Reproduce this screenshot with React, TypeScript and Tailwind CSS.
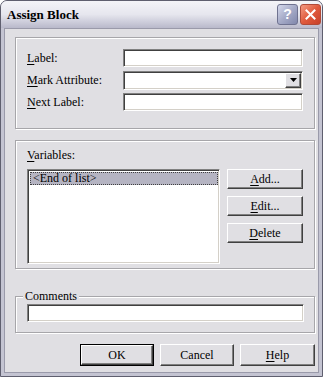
import React from "react";

const font = { fontFamily: '"Liberation Serif", "Times New Roman", serif' };

function U({ children }: { children: React.ReactNode }) {
  return <span className="underline underline-offset-[2px] decoration-1">{children}</span>;
}

// sunken field, classic 2px inset edge
function Field({ className = "", children }: { className?: string; children?: React.ReactNode }) {
  return (
    <div
      className={
        "border border-t-[#808080] border-l-[#808080] border-b-white border-r-white bg-white shadow-[inset_1px_1px_0_#404040,inset_-1px_-1px_0_#d4d0c8] " +
        className
      }
    >
      {children}
    </div>
  );
}

function Btn({
  children,
  className = "",
  isDefault = false,
}: {
  children: React.ReactNode;
  className?: string;
  isDefault?: boolean;
}) {
  const inner = (
    <div className="flex h-full w-full items-center justify-center border border-t-white border-l-white border-b-[#404040] border-r-[#404040] bg-[#e0dfe3] text-[12px] text-black shadow-[inset_-1px_-1px_0_#808080]">
      {children}
    </div>
  );
  if (isDefault) {
    return <div className={"border border-black " + className}>{inner}</div>;
  }
  return <div className={className}>{inner}</div>;
}

function Group({ className = "", children }: { className?: string; children: React.ReactNode }) {
  return (
    <div
      className={
        "relative border border-[#a7a6aa] shadow-[inset_1px_1px_0_#fff,1px_1px_0_#fff] " + className
      }
    >
      {children}
    </div>
  );
}

export default function App() {
  return (
    <div className="h-[377px] w-[327px] bg-white" style={font}>
      <div className="flex h-[377px] w-[323px] flex-col overflow-hidden rounded-t-[7px] border border-[#5f5f6f] bg-[#c4c4d2]">
        {/* Title bar */}
        <div className="flex h-[27px] shrink-0 items-center justify-between bg-gradient-to-b from-[#f4f4f8] via-[#e6e6ee] to-[#b9b9cb] pl-[6px] pr-[1px]">
          <span className="text-[13px] font-bold text-black">Assign Block</span>
          <div className="flex gap-[2px]">
            <div className="flex h-[21px] w-[21px] items-center justify-center rounded-[3px] border border-[#6f7290] bg-gradient-to-br from-[#d5d9ec] via-[#a6abc8] to-[#8187ab] text-[14px] font-bold text-white" style={{ fontFamily: '"Liberation Sans", sans-serif' }}>
              ?
            </div>
            <div className="flex h-[21px] w-[21px] items-center justify-center rounded-[3px] border border-[#b04a38] bg-gradient-to-br from-[#f29a83] via-[#e05a3c] to-[#c8402a]">
              <svg width="11" height="11" viewBox="0 0 11 11">
                <path d="M1.5 1.5 L9.5 9.5 M9.5 1.5 L1.5 9.5" stroke="white" strokeWidth="2" strokeLinecap="square" />
              </svg>
            </div>
          </div>
        </div>

        {/* Body */}
        <div className="mx-[3px] mb-[3px] flex flex-1 flex-col border border-[#9a9aaa] bg-[#e0dfe3] pl-[10px] pr-[4px] pt-[8px] text-[12px] text-black">
          <Group className="flex h-[92px] w-[300px] flex-col gap-[4px] pl-[11px] pr-[11px] pt-[11px]">
            <div className="flex h-[18px] items-center justify-between">
              <span>
                <U>L</U>abel:
              </span>
              <Field className="h-[18px] w-[180px]" />
            </div>
            <div className="flex h-[18px] items-center justify-between">
              <span>
                <U>M</U>ark Attribute:
              </span>
              <Field className="flex h-[19px] w-[180px] justify-end">
                <div className="m-[1px] flex w-[16px] items-center justify-center border border-t-white border-l-white border-b-[#404040] border-r-[#404040] bg-[#e0dfe3] shadow-[inset_-1px_-1px_0_#808080]">
                  <svg width="7" height="4" viewBox="0 0 7 4">
                    <path d="M0 0 H7 L3.5 4 Z" fill="black" />
                  </svg>
                </div>
              </Field>
            </div>
            <div className="flex h-[18px] items-center justify-between">
              <span>
                <U>N</U>ext Label:
              </span>
              <Field className="h-[18px] w-[180px]" />
            </div>
          </Group>

          <Group className="mt-[11px] h-[129px] w-[300px] pl-[11px] pr-[11px] pt-[6px]">
            <div className="h-[22px] leading-[16px]">
              <U>V</U>ariables:
            </div>
            <div className="flex gap-[7px]">
              <Field className="h-[95px] w-[194px] p-[1px]">
                <div className="ml-[1px] mt-[1px] h-[13px] border border-dotted border-[#404040] bg-[#b5b4c2] pl-[2px] text-[12px] leading-[11px]">
                  &lt;End of list&gt;
                </div>
              </Field>
              <div className="flex flex-col gap-[7px]">
                <Btn className="h-[20px] w-[76px]">
                  <span>
                    <U>A</U>dd...
                  </span>
                </Btn>
                <Btn className="h-[20px] w-[76px]">
                  <span>
                    <U>E</U>dit...
                  </span>
                </Btn>
                <Btn className="h-[20px] w-[76px]">
                  <span>
                    <U>D</U>elete
                  </span>
                </Btn>
              </div>
            </div>
          </Group>

          <Group className="mt-[27px] h-[37px] w-[300px] pl-[11px] pt-[7px]">
            <span className="absolute left-[7px] top-[-9px] bg-[#e0dfe3] px-[2px] leading-[16px]">Comments</span>
            <Field className="h-[18px] w-[277px]" />
          </Group>

          <div className="mt-[11px] flex w-[300px] justify-end gap-[6px] pr-[0px]">
            <Btn isDefault className="h-[22px] w-[74px]">
              OK
            </Btn>
            <Btn className="h-[22px] w-[74px]">Cancel</Btn>
            <Btn className="h-[22px] w-[75px]">
              <span>
                <U>H</U>elp
              </span>
            </Btn>
          </div>
        </div>
      </div>
    </div>
  );
}
